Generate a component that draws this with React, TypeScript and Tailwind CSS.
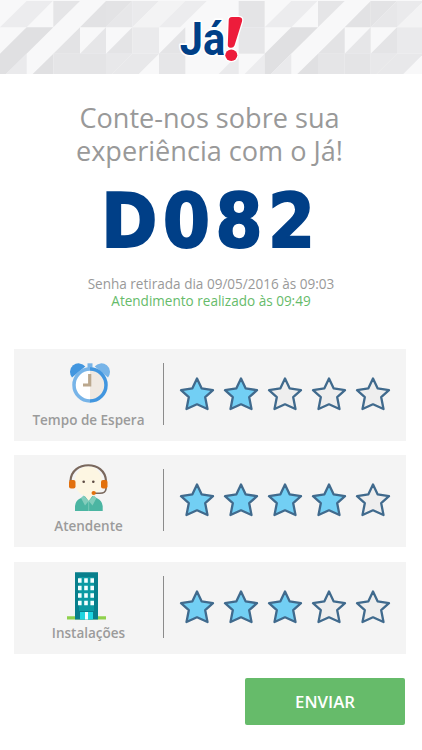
import { useState } from 'react'

type Icon = () => React.JSX.Element

// Background of the header: one tile of triangles, repeated across the bar
const TILE: [string, string][] = [
  ['80,3 158,3 80,82 0,82', '#ececee'],
  ['160,3 240,3 160,82', '#e5e5e7'],
  ['318,3 318,82 240,82', '#e2e2e4'],
  ['318,3 397,3 318,82', '#e3e3e5'],
  ['397,3 397,82 318,82', '#e7e7e9'],
  ['397,3 477,3 397,82', '#eaeaec'],
  ['477,3 556,3 477,82 397,82', '#f3f3f4'],
  ['556,3 620,3 540,82 477,82', '#ececee'],
  ['80,82 160,82 0,240 0,161', '#e0e0e2'],
  ['240,82 240,161 160,161', '#e3e3e5'],
  ['318,82 318,161 240,161', '#e6e6e8'],
  ['397,82 397,161 318,161', '#e4e4e6'],
  ['397,82 477,82 477,161 397,161', '#eaeaec'],
  ['556,82 556,161 477,161', '#e4e4e6'],
  ['80,161 80,222 18,222', '#eaeaec'],
  ['160,161 160,222 98,222', '#e0e0e2'],
  ['160,161 240,161 240,222 160,222', '#e5e5e7'],
  ['240,161 318,161 318,222 240,222', '#e4e4e6'],
  ['318,161 397,161 336,222 318,222', '#e8e8ea'],
  ['397,161 477,161 416,222 336,222', '#e8e8ea'],
  ['477,161 556,161 556,222 477,222', '#e6e6e8'],
  ['716,3 794,3 794,82 716,82', '#e4e4e6'],
  ['716,82 794,82 794,161 716,161', '#e6e6e8'],
  ['716,161 716,222 656,222', '#eaeaec'],
  ['794,161 794,222 734,222', '#ececee'],
]

function HeaderPattern() {
  return (
    <svg viewBox="0 0 1266 222" className="absolute inset-0 h-[74px] w-[422px]">
      {[0, 794].map(x => (
        <g key={x} transform={`translate(${x} 0)`}>
          {TILE.map(([points, fill]) => <polygon key={points} points={points} fill={fill} />)}
        </g>
      ))}
    </svg>
  )
}

function Logo() {
  return (
    <svg viewBox="0 0 82 60" className="relative h-[60px] w-[82px] shrink-0">
      <text x="9.8" y="46.5" textLength="45.5" lengthAdjust="spacingAndGlyphs" fontFamily="Roboto, sans-serif" fontWeight="700" fontSize="46.5"
        fill="#003f87" stroke="#fff" strokeWidth="3.5" strokeLinejoin="round" paintOrder="stroke">Já</text>
      <g fill="#ed1c3b" stroke="#fff" strokeWidth="2.6" paintOrder="stroke">
        <path d="M58.700 13 Q58.500 9 62 9 H69 Q73 9.300 72 13.500 L64.500 37.500 Q63.500 40 60.500 39.700 Q57.500 39.500 57.800 36.500 Z" />
        <ellipse cx="61.300" cy="47.300" rx="6" ry="5.700" />
      </g>
    </svg>
  )
}

function ClockIcon() {
  return (
    <svg viewBox="0 0 42 42" className="mt-[13px] ml-[2px] h-[42px] w-[42px]">
      <path d="M3 15.500 A8.500 8.500 0 0 1 16.300 4.500 Z" fill="#4296df" />
      <path d="M39 15.500 A8.500 8.500 0 0 0 25.700 4.500 Z" fill="#77b4e8" />
      <path d="M18.500 1.300 h5 v6 h-5z" fill="#77b4e8" />
      <circle cx="21" cy="23" r="15.800" fill="#fff" />
      <path d="M21 7 a16 16 0 0 1 0 32z" fill="#f0e9e2" />
      <path d="M21 7 a16 16 0 0 0 0 32" fill="none" stroke="#77b4e8" strokeWidth="3.500" />
      <path d="M21 7 a16 16 0 0 1 0 32" fill="none" stroke="#4296df" strokeWidth="3.500" />
      <path d="M20.700 12 v11 h-6.700" fill="none" stroke="#bba88e" strokeWidth="3.200" />
    </svg>
  )
}

function AgentIcon() {
  return (
    <svg viewBox="0 0 41 47" className="mt-[9px] h-[47px] w-[41px]">
      <path d="M7 47 V42 Q7.500 36.500 12 34.500 L17 32 H24.500 L29.500 34.500 Q34 36.500 34.700 42 V47 Z" fill="#4bb5a2" />
      <ellipse cx="20.500" cy="17.500" rx="13.700" ry="15" fill="#fdf6e2" />
      <path d="M15.500 30.500 H25.500 L20.700 37 Z" fill="#fdf6e2" />
      <path d="M15.500 31.500 L20.700 37 L17 41.500 L13 34z M26 31.500 L20.700 37 L24.500 41.500 L28.500 34z" fill="#83cdbc" />
      <path d="M20.700 37 v10" stroke="#83cdbc" strokeWidth=".8" />
      <path d="M2.500 17 C3.500 -4 37 -4 38 17" fill="none" stroke="#7a685d" strokeWidth="2.200" />
      <path d="M38 23 V25 Q37.500 29.300 32 29.300 H26" fill="none" stroke="#7a685d" strokeWidth="1.600" />
      <rect x="1" y="16" width="6.500" height="8.500" rx="2" fill="#e2700d" />
      <rect x="33" y="16" width="6.500" height="8.500" rx="2" fill="#e2700d" />
      <circle cx="15.700" cy="17.700" r="1.300" fill="#5c4a42" />
      <circle cx="25.300" cy="17.700" r="1.300" fill="#5c4a42" />
      <ellipse cx="25.700" cy="29" rx="2.200" ry="2" fill="#e2700d" />
    </svg>
  )
}

function BuildingIcon() {
  return (
    <svg viewBox="0 0 40 48" className="mt-[10px] mr-[3px] h-[48px] w-[40px]">
      <path d="M0 44.200 h39 v3.300 h-39z" fill="#8fd14c" />
      <path d="M8 .3 h23 v47.200 h-23z" fill="#087f8c" />
      <path d="M12 5 h15 v34 h-15z" fill="#0b9aa3" />
      {[6.3, 13.8, 21.3, 28.8].map(y => (
        <path key={y} d={`M11 ${y} h3.600 v4.400 h-3.600z M17.200 ${y} h3.600 v4.400 h-3.600z M23.400 ${y} h3.600 v4.400 h-3.600z`} fill="#f4ffff" />
      ))}
      <path d="M13 40 h13 v7.500 h-13z" fill="#1ed5e0" />
      <path d="M18 40 h3 v7.500 h-3z" fill="#f0ffff" />
    </svg>
  )
}

function Star({ filled, onClick }: { filled: boolean; onClick: () => void }) {
  return (
    <button onClick={onClick} className="h-[36px] w-[36px]">
      <svg viewBox="0 0 36 36" className="h-full w-full">
        <path d="M18 2.500 L22.600 12.300 L34 14.200 L26.200 21.200 L28.500 33 L18 28.300 L7.500 33 L9.800 21.200 L2 14.200 L13.400 12.300 Z"
          fill={filled ? '#72cff4' : '#eeeeee'} stroke="#406a8d" strokeWidth="2.300" strokeLinejoin="round" />
      </svg>
    </button>
  )
}

function RatingRow({ label, icon: RowIcon, initial }: { label: string; icon: Icon; initial: number }) {
  const [rating, setRating] = useState(initial)

  return (
    <div className="flex h-[92px] items-center bg-[#f4f4f4] pb-[2px]">
      <div className="flex h-full w-[149px] flex-col items-center">
        <div className="flex h-[61px] items-start justify-center">
          <RowIcon />
        </div>
        <span className="text-[13.5px] leading-[20px] font-semibold text-[#9b9b9b]">{label}</span>
      </div>
      <div className="h-[62px] w-px bg-[#8b8b8b]" />
      <div className="ml-[15px] flex gap-[8px]">
        {[1, 2, 3, 4, 5].map(n => <Star key={n} filled={n <= rating} onClick={() => setRating(n)} />)}
      </div>
    </div>
  )
}

export default function App() {
  return (
    <div className="h-[750px] w-[422px] overflow-hidden bg-white font-['Open_Sans','Noto_Sans',sans-serif]">
      <header className="relative flex h-[74px] justify-center bg-[#f8f8f9] pt-[8px]">
        <HeaderPattern />
        <Logo />
      </header>

      {/* Ticket */}
      <div className="flex h-[275px] flex-col text-center">
        <h1 className="mt-[27px] pr-[3px] text-[27.1px] leading-[33px] text-[#999999]">
          Conte-nos sobre sua<br />experiência com o Já!
        </h1>
        <div className="mt-[6px] font-['DejaVu_Sans_Condensed','DejaVu_Sans',sans-serif] text-[75px] leading-[96px] font-bold tracking-[5.6px] text-[#003f87] [-webkit-text-stroke:2px_#003f87]">D082</div>
        <p className="mt-[7px] text-[13.55px] leading-[17px] text-[#999999]">Senha retirada dia 09/05/2016 às 09:03</p>
        <p className="text-[13.55px] leading-[17px] text-[#66bb6a]">Atendimento realizado às 09:49</p>
      </div>

      {/* Ratings */}
      <div className="mx-[14px] flex w-[392px] flex-col gap-[14.4px]">
        <RatingRow label="Tempo de Espera" icon={ClockIcon} initial={2} />
        <RatingRow label="Atendente" icon={AgentIcon} initial={4} />
        <RatingRow label="Instalações" icon={BuildingIcon} initial={3} />
      </div>

      <div className="mt-[24.2px] flex justify-end pr-[17px]">
        <button className="h-[47px] w-[160px] rounded-[2px] bg-[#66bb6a] text-[16.8px] font-semibold text-white">ENVIAR</button>
      </div>
    </div>
  )
}
